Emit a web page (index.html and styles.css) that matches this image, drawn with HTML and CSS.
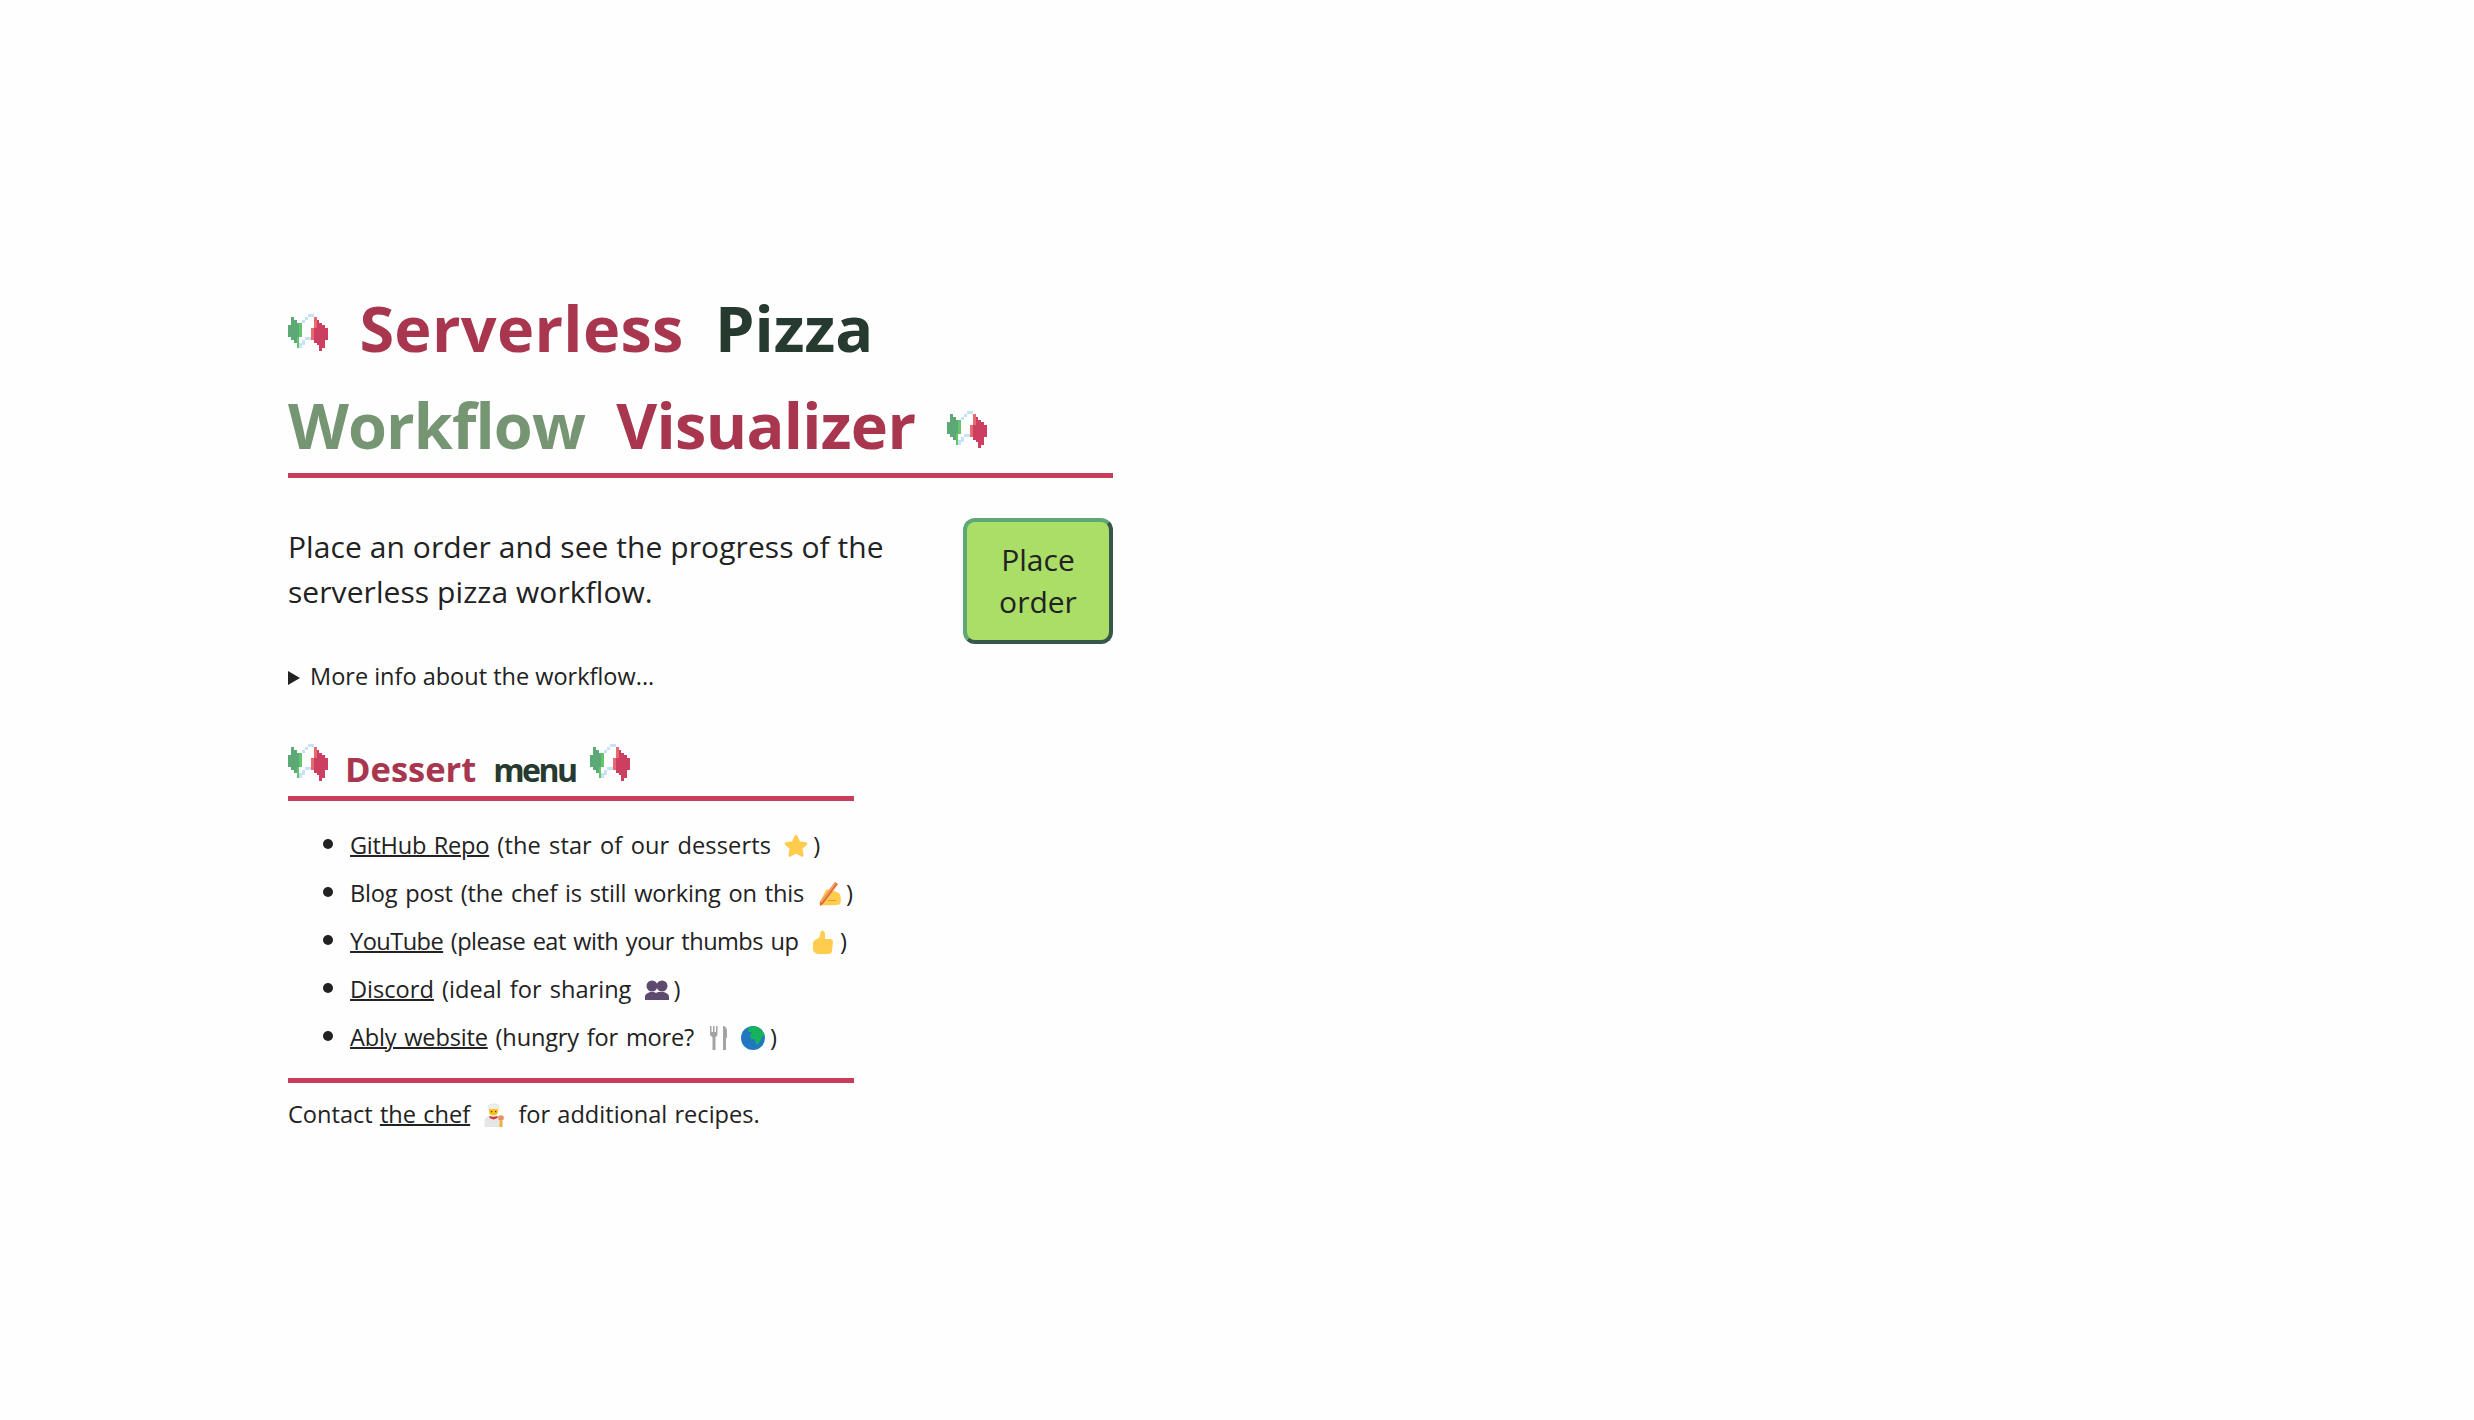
FILE: index.html
```html
<!DOCTYPE html>
<html lang="en">
<head>
    <meta charset="UTF-8">
    <title>Serverless Pizza Workflow Visualizer</title>
    <link rel="stylesheet" href="styles.css">
</head>
<body>
<svg class="sprite" aria-hidden="true">
    <symbol id="flag" viewBox="0 0 14 13" shape-rendering="crispEdges">
        <g fill="#c5e3f5">
            <rect x="7" y="0" width="2" height="1"/><rect x="6" y="1" width="1" height="1"/><rect x="5" y="2" width="1" height="1"/>
            <rect x="6" y="8" width="2" height="1"/><rect x="5" y="9" width="1" height="1"/><rect x="4" y="10" width="2" height="1"/><rect x="4" y="11" width="1" height="1"/>
        </g>
        <g fill="#5ca876">
            <rect x="1" y="1" width="1" height="1"/><rect x="1" y="2" width="2" height="1"/><rect x="1" y="3" width="3" height="1"/>
            <rect x="0" y="4" width="4" height="4"/><rect x="1" y="8" width="2" height="1"/><rect x="2" y="9" width="1" height="1"/>
        </g>
        <g fill="#66c46c">
            <rect x="4" y="3" width="1" height="5"/><rect x="3" y="8" width="1" height="4"/>
        </g>
        <g fill="#cc3f60">
            <rect x="10" y="2" width="1" height="1"/><rect x="10" y="3" width="2" height="1"/><rect x="10" y="4" width="3" height="1"/>
            <rect x="9" y="5" width="5" height="4"/><rect x="9" y="9" width="4" height="1"/><rect x="10" y="10" width="3" height="1"/>
            <rect x="11" y="11" width="2" height="1"/><rect x="11" y="12" width="1" height="1"/>
        </g>
        <g fill="#e76a6e">
            <rect x="9" y="1" width="1" height="4"/><rect x="8" y="5" width="1" height="4"/>
        </g>
    </symbol>
    <symbol id="star" viewBox="0 0 24 24">
        <path fill="#ffcc4d" stroke="#ffcc4d" stroke-width="3" stroke-linejoin="round" d="M12 2.500l3 6.300 6.800.9-5 4.700 1.300 6.800-6.100-3.300-6.100 3.300 1.300-6.800-5-4.700 6.800-.9z"/>
    </symbol>
    <symbol id="hand" viewBox="0 0 24 24">
        <path fill="#ffcc4d" d="M9 8c2-1 5 0 8 1 3 .8 6 2 6.500 5 .4 3 .5 7-.5 8-3 1.500-8 1.500-12 1.200C8 23 4 24 2 22z"/>
        <path fill="#e0a030" d="M11 18h8v1h-8z"/>
        <path fill="#dd6b3f" d="M18 0l3 2L6 22l-3 2 0-4z"/>
        <path fill="#f4a25c" d="M18 0l1.500 1L4.500 21 3 20z"/>
    </symbol>
    <symbol id="thumb" viewBox="0 0 24 24">
        <path fill="#ffcc4d" d="M10 1c2-1 4 .5 4 3v5h5c2 0 3 1.500 3 3l-1 9c-.3 2-1.500 3-3.500 3H9c-4 0-7-2-7-5v-6c0-2 2-3 4-4 2-1 3-2 3-4z"/>
    </symbol>
    <symbol id="people" viewBox="0 0 24 20">
        <g fill="#5d4a6e">
            <circle cx="7" cy="6" r="5.500"/><circle cx="17" cy="6" r="5.500"/>
            <path d="M0 20v-3c0-3 3-4 5-5h4l2 1 2-1h6c2 1 5 2 5 5v3z"/>
        </g>
    </symbol>
    <symbol id="cutlery" viewBox="0 0 18 24">
        <g fill="#a3a3a3">
            <path d="M0 0h1.500v6H3V0h1.500v6H6V0h1.500v8c0 1.500-1 2.500-2 3v13h-3V11c-1-.5-2.500-1.500-2.500-3z"/>
            <path d="M13 0c2.500 0 4 2 4 5v7h-1v12h-3z"/>
        </g>
    </symbol>
    <symbol id="globe" viewBox="0 0 24 24">
        <circle cx="12" cy="12" r="12" fill="#2278c0"/>
        <path fill="#15b35c" d="M7 2c3-2 9-2 12 .5 2 1.500 3.500 4 4.500 7-1.500.5-2.500 1-3 2.500-.5 2-2 4-3 5.500-1 .8-2 1.500-2.500.5-.5-2-.5-3.500-1.500-5-2 .5-4 0-4.500-2-.4-2 1-3 1.500-4 .5-1-1.500-1-2.500-1-1 0-1-2.500-1-4.500z"/>
    </symbol>
    <symbol id="chef" viewBox="0 0 21 24">
        <path fill="#e6e6e6" d="M1 24v-6c0-3 3-5 5-5h8c3 0 5 2 5 5v6z"/>
        <path fill="#efefef" stroke="#d8d8d8" stroke-width=".6" d="M6 7C4 6 4 2 6 2c1-1.500 7-1.500 8 0 2 0 2 4 0 5z"/>
        <path fill="#fcc21b" d="M5.500 6h9v3c0 2-2 3.500-4.500 3.500S5.500 11 5.500 9z"/>
        <path fill="#5a3a20" d="M7.500 8h1.200v1.200H7.500zM11.500 8h1.200v1.200h-1.200z"/>
        <path fill="#d1343d" d="M6 13l4 1 4-1v2l-4 1.500L6 15z"/>
        <path fill="#f2b03c" d="M16 24v-6h3v6z"/>
        <circle cx="17.500" cy="15" r="2.800" fill="#e8915a"/>
    </symbol>
</svg>

<main id="page">
    <header class="head">
        <h1>
            <svg class="flag" role="img" aria-label="Italian flag"><use href="#flag"/></svg>
            <span class="rose wider">Serverless</span> <span class="dark">Pizza</span>
            <span class="sage">Workflow</span> <span class="rose narrower">Visualizer</span>
            <svg class="flag" role="img" aria-label="Italian flag"><use href="#flag"/></svg>
        </h1>
        <div class="intro">
            <p class="lead">Place an order and see the progress of the serverless pizza workflow.</p>
            <button class="order" type="button">Place order</button>
        </div>
        <details class="more">
            <summary>More info about the workflow...</summary>
        </details>
    </header>

    <section class="menu">
        <h2>
            <svg class="flag" role="img" aria-label="Italian flag"><use href="#flag"/></svg>
            <span class="rose">Dessert</span> <span class="dark squeeze">menu</span>
            <svg class="flag" role="img" aria-label="Italian flag"><use href="#flag"/></svg>
        </h2>
        <ul>
            <li><a href="#">GitHub Repo</a> (the star of our desserts <svg class="ico"><use href="#star"/></svg>)</li>
            <li>Blog post (the chef is still working on this <svg class="ico"><use href="#hand"/></svg>)</li>
            <li><a href="#">YouTube</a> (please eat with your thumbs up <svg class="ico"><use href="#thumb"/></svg>)</li>
            <li><a href="#">Discord</a> (ideal for sharing <svg class="ico"><use href="#people"/></svg>)</li>
            <li><a href="#">Ably website</a> (hungry for more? <svg class="ico"><use href="#cutlery"/></svg><svg class="ico"><use href="#globe"/></svg>)</li>
        </ul>
        <p class="contact">Contact <a href="#">the chef</a> <svg class="ico"><use href="#chef"/></svg> for additional recipes.</p>
    </section>
</main>
</body>
</html>
```

FILE: styles.css
```css
*{
    margin: 0;
    padding: 0;
    box-sizing: border-box;
}
body{
    font-family: "Comic Sans MS", "Open Sans", sans-serif;
    color: #222222;
    background-color: #fefefe;
}
.sprite{
    position: absolute;
    width: 0;
    height: 0;
}
#page{
    padding: 279px 0 0 288px;
}
.head{
    width: 825px;
}
h1{
    font-size: 63px;
    line-height: 97px;
    word-spacing: 15px;
    border-bottom: 5px solid #c73d5a;
}
.rose{
    color: #a9364f;
}
.dark{
    color: #263a30;
}
.sage{
    color: #769572;
    letter-spacing: -0.9px;
}
.wider{
    letter-spacing: 0.3px;
}
.narrower{
    letter-spacing: -0.7px;
}
.flag{
    width: 40px;
    height: 39px;
    vertical-align: 0;
}
.intro{
    display: flex;
    justify-content: space-between;
    margin-top: 40px;
}
.lead{
    width: 640px;
    font-size: 30px;
    line-height: 45px;
    letter-spacing: 0.07px;
    padding-top: 6px;
}
.order{
    width: 150px;
    height: 126px;
    font-family: inherit;
    font-size: 30px;
    line-height: 42px;
    color: #222222;
    background-color: #aade66;
    border: 4px solid;
    border-color: #5fa777 #37574a #37574a #5fa777;
    border-radius: 12px;
}
.more{
    margin-top: 13px;
    font-size: 23.5px;
    line-height: 38px;
}
.more summary{
    display: block;
    cursor: pointer;
}
.more summary::before{
    content: "";
    display: inline-block;
    margin-right: 10px;
    border-left: 12px solid #222222;
    border-top: 7px solid transparent;
    border-bottom: 7px solid transparent;
}
.menu{
    width: 566px;
    margin-top: 48px;
}
h2{
    font-size: 34.5px;
    line-height: 52px;
    word-spacing: 8px;
    border-bottom: 5px solid #c73d5a;
}
.squeeze{
    font-size: 32px;
    letter-spacing: -2.5px;
    margin-right: -3px;
}
ul{
    margin-top: 23px;
    padding-left: 62px;
}
li{
    font-size: 23.6px;
    line-height: 38px;
    word-spacing: 2px;
    white-space: nowrap;
    margin-bottom: 8px;
}
li:nth-child(1){
    letter-spacing: 0.1px;
}
li:nth-child(1) a{
    letter-spacing: -0.3px;
}
li:nth-child(2){
    letter-spacing: -0.2px;
}
li:nth-child(3){
    letter-spacing: -0.55px;
}
li:nth-child(5){
    letter-spacing: -0.2px;
}
li::marker{
    font-size: 28px;
}
a{
    color: #222222;
    text-decoration-thickness: 2px;
}
.ico{
    width: 24px;
    height: 24px;
    margin: 0 5px;
    vertical-align: -4px;
}
.contact{
    margin-top: 22px;
    padding-top: 12px;
    border-top: 5px solid #c73d5a;
    font-size: 23.6px;
    line-height: 38px;
    word-spacing: 1px;
}
```
